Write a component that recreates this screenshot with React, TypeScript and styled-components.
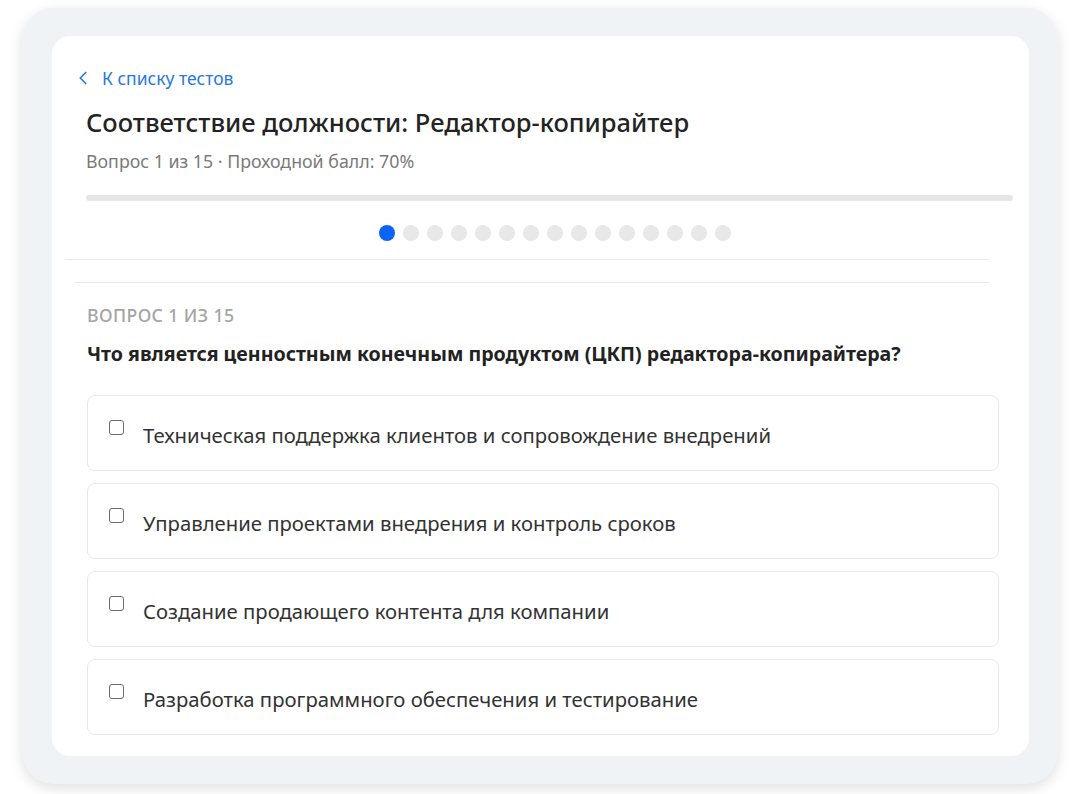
import React from 'react'
import styled, { createGlobalStyle } from 'styled-components'
import { ChevronLeft } from 'lucide-react'

const GlobalStyle = createGlobalStyle`
  body {
    margin: 0;
    background: #ffffff;
    font-family: "Noto Sans", "Open Sans", Arial, sans-serif;
  }
`

const Frame = styled.div`
  margin: 8px 22px 10px 22px;
  height: 776px;
  box-sizing: border-box;
  padding: 28px 29px 28px 30px;
  background: #f0f3f6;
  border-radius: 32px;
  box-shadow: 0 4px 14px rgba(0, 0, 0, 0.13);
`

const Card = styled.div`
  height: 100%;
  background: #ffffff;
  border-radius: 18px;
  overflow: hidden;
`

const Header = styled.div`
  padding: 30px 16px 18px 34px;
  display: flex;
  flex-direction: column;
`

const BackLink = styled.a`
  display: flex;
  align-items: center;
  gap: 8px;
  margin-left: -14px;
  color: #2678e4;
  font-size: 17.5px;
  line-height: 24px;
  text-decoration: none;
  cursor: pointer;
`

const Title = styled.h1`
  margin: 16px 0 0;
  font-size: 25.5px;
  line-height: 32px;
  font-weight: 500;
  color: #232323;
`

const Meta = styled.div`
  margin-top: 11px;
  font-size: 17.8px;
  line-height: 24px;
  color: #7a7a7a;
`

const Track = styled.div`
  margin-top: 22px;
  height: 6px;
  border-radius: 3px;
  background: #e6e6e6;
`

const Dots = styled.div`
  margin-top: 24px;
  padding-left: 11px;
  display: flex;
  justify-content: center;
  gap: 8px;
`

const Dot = styled.span<{ $active?: boolean }>`
  width: 16px;
  height: 16px;
  border-radius: 50%;
  background: ${p => (p.$active ? '#0a63f5' : '#e8e8e8')};
`

const Divider = styled.div<{ $left: number }>`
  height: 1px;
  margin: 0 40px 0 ${p => p.$left}px;
  background: #ebebeb;
`

const Spacer = styled.div`
  height: 22px;
`

const Body = styled.div`
  padding: 21px 30px 22px 35px;
`

const Label = styled.div`
  font-size: 17.7px;
  line-height: 22px;
  font-weight: 500;
  letter-spacing: 0.4px;
  color: #a4a4a4;
  text-transform: uppercase;
`

const Question = styled.div`
  margin-top: 16px;
  font-size: 19.6px;
  line-height: 24px;
  font-weight: 700;
  color: #222222;
`

const Options = styled.div`
  margin-top: 29px;
  display: flex;
  flex-direction: column;
  gap: 12px;
`

const Option = styled.label`
  display: flex;
  align-items: flex-start;
  gap: 19px;
  padding: 24px 22px 20px 21px;
  border: 1px solid #e8e8e8;
  border-radius: 8px;
  cursor: pointer;
`

const Box = styled.span`
  flex: none;
  width: 15px;
  height: 15px;
  box-sizing: border-box;
  border: 1.5px solid #6b6b6b;
  border-radius: 3px;
  background: #fff;
`

const OptionText = styled.span`
  font-size: 20.3px;
  line-height: 30px;
  color: #333333;
`

const answers = [
  'Техническая поддержка клиентов и сопровождение внедрений',
  'Управление проектами внедрения и контроль сроков',
  'Создание продающего контента для компании',
  'Разработка программного обеспечения и тестирование',
]

const total = 15
const current = 1

const App = () => (
  <React.Fragment>
    <GlobalStyle />
    <Frame>
      <Card>
        <Header>
          <BackLink>
            <ChevronLeft size={22} strokeWidth={1.8} />К списку тестов
          </BackLink>
          <Title>Соответствие должности: Редактор-копирайтер</Title>
          <Meta>
            Вопрос {current} из {total} · Проходной балл: 70%
          </Meta>
          <Track />
          <Dots>
            {Array.from({ length: total }, (_, i) => (
              <Dot key={i} $active={i === current - 1} />
            ))}
          </Dots>
        </Header>
        <Divider $left={13} />
        <Spacer />
        <Divider $left={23} />
        <Body>
          <Label>
            Вопрос {current} из {total}
          </Label>
          <Question>Что является ценностным конечным продуктом (ЦКП) редактора-копирайтера?</Question>
          <Options>
            {answers.map(a => (
              <Option key={a}>
                <Box />
                <OptionText>{a}</OptionText>
              </Option>
            ))}
          </Options>
        </Body>
      </Card>
    </Frame>
  </React.Fragment>
)

export default App
